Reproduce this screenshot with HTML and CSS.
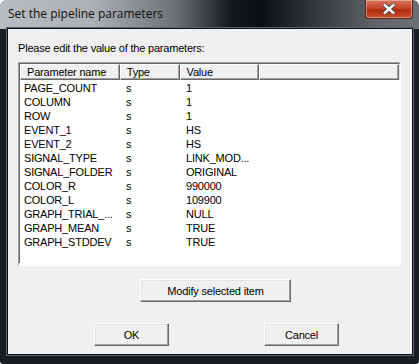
FILE: index.html
```html
<!DOCTYPE html>
<html>
<head>
    <title>Set the pipeline parameters</title>
    <link rel="stylesheet" href="styles.css">
</head>
<body>
    <div class="window">
        <div class="titlebar">
            <span class="title">Set the pipeline parameters</span>
            <div class="close">
                <svg width="16" height="12" viewBox="0 0 16 12">
                    <path d="M3 1.5 L13 10.5 M13 1.5 L3 10.5" stroke="#3a3f45" stroke-width="4.2" fill="none"/>
                    <path d="M3 1.5 L13 10.5 M13 1.5 L3 10.5" stroke="#fff" stroke-width="2.4" fill="none"/>
                </svg>
            </div>
        </div>

        <div class="client">
            <div class="label">Please edit the value of the parameters:</div>

            <!-- parameter list -->
            <div class="list">
                <div class="head">
                    <div class="hcol c1">Parameter name</div>
                    <div class="hcol c2">Type</div>
                    <div class="hcol c3">Value</div>
                    <div class="hcol c4"></div>
                </div>
                <div class="rows">
                    <div class="row"><span class="c1">PAGE_COUNT</span><span class="c2">s</span><span class="c3">1</span></div>
                    <div class="row"><span class="c1">COLUMN</span><span class="c2">s</span><span class="c3">1</span></div>
                    <div class="row"><span class="c1">ROW</span><span class="c2">s</span><span class="c3">1</span></div>
                    <div class="row"><span class="c1">EVENT_1</span><span class="c2">s</span><span class="c3">HS</span></div>
                    <div class="row"><span class="c1">EVENT_2</span><span class="c2">s</span><span class="c3">HS</span></div>
                    <div class="row"><span class="c1">SIGNAL_TYPE</span><span class="c2">s</span><span class="c3">LINK_MOD...</span></div>
                    <div class="row"><span class="c1">SIGNAL_FOLDER</span><span class="c2">s</span><span class="c3">ORIGINAL</span></div>
                    <div class="row"><span class="c1">COLOR_R</span><span class="c2">s</span><span class="c3">990000</span></div>
                    <div class="row"><span class="c1">COLOR_L</span><span class="c2">s</span><span class="c3">109900</span></div>
                    <div class="row"><span class="c1">GRAPH_TRIAL_...</span><span class="c2">s</span><span class="c3">NULL</span></div>
                    <div class="row"><span class="c1">GRAPH_MEAN</span><span class="c2">s</span><span class="c3">TRUE</span></div>
                    <div class="row"><span class="c1">GRAPH_STDDEV</span><span class="c2">s</span><span class="c3">TRUE</span></div>
                </div>
            </div>

            <div class="center">
                <button class="btn modify">Modify selected item</button>
            </div>
            <div class="actions">
                <button class="btn">OK</button>
                <button class="btn">Cancel</button>
            </div>
        </div>
    </div>
</body>
</html>
```

FILE: styles.css
```css
* { margin: 0; padding: 0; box-sizing: border-box; }
body { background: #fff; font: 11px "Liberation Sans", Arial, sans-serif; color: #000; letter-spacing: -0.2px; }

.window { width: 419px; height: 364px; background: #1a1e23; border-radius: 6px 6px 3px 3px; padding: 0 6px 9px 7px; display: flex; flex-direction: column;
    background-image: linear-gradient(90deg, #b8bcc0 0%, #adb1b5 22%, #6c7075 42%, #15191d 55%, #0b0e12 62%, #3c4045 78%, #62666a 90%, #6b6f73 100%);
    background-size: 100% 29px; background-repeat: no-repeat; }
.titlebar { height: 28px; display: flex; align-items: flex-start; margin-left: -7px; margin-right: -6px; }
.title { font: 12px "Open Sans", "Noto Sans", sans-serif; letter-spacing: 0; color: #111; padding: 5px 0 0 8px; }
.close { margin-left: auto; margin-right: 6px; width: 48px; height: 19px; border: 1px solid #5a2a22; border-top: 0; border-radius: 0 0 4px 4px;
    background: linear-gradient(#d9765d, #c4452b 45%, #b22a12 55%, #c9512f); box-shadow: inset 0 0 0 1px rgba(255,255,255,0.35);
    display: flex; align-items: center; justify-content: center; }

.client { flex: 1; background: #f0f0f0; border: 1px solid #0e1116; outline: 1px solid #5d6268; padding: 13px 10px 0 10px; }
.label { line-height: 13px; height: 13px; }

.list { margin-top: 7px; width: 383px; height: 204px; background: #fff; border: 1px solid; border-color: #a0a0a0 #fff #fff #a0a0a0; }
.head { display: flex; height: 17px; border: 1px solid; border-color: #696969 #e3e3e3 #e3e3e3 #696969; border-bottom: 0; background: #f0f0f0; }
.hcol { height: 16px; line-height: 14px; border: 1px solid; border-color: #fff #696969 #696969 #fff; box-shadow: inset -1px -1px 0 #a0a0a0; padding-left: 6px; }
.head .c1 { width: 100px; }
.head .c2 { width: 60px; }
.head .c3 { width: 80px; }
.head .c4 { width: 140px; }
.rows { padding-top: 1px; border-left: 1px solid #696969; height: 183px; }
.row { display: flex; height: 14px; line-height: 14px; }
.row .c1 { width: 100px; padding-left: 4px; }
.row .c2 { width: 60px; padding-left: 6px; }
.row .c3 { width: 80px; padding-left: 6px; }

.btn { font: 11px "Liberation Sans", Arial, sans-serif; letter-spacing: -0.2px; background: #f0f0f0; height: 23px; border: 1px solid; border-color: #fff #696969 #696969 #fff; box-shadow: inset -1px -1px 0 #a0a0a0, inset 1px 1px 0 #e3e3e3; }
.center { margin-top: 13px; padding-left: 122px; }
.modify { width: 151px; }
.actions { margin-top: 21px; display: flex; gap: 95px; padding-left: 76px; }
.actions .btn { width: 75px; }
```
